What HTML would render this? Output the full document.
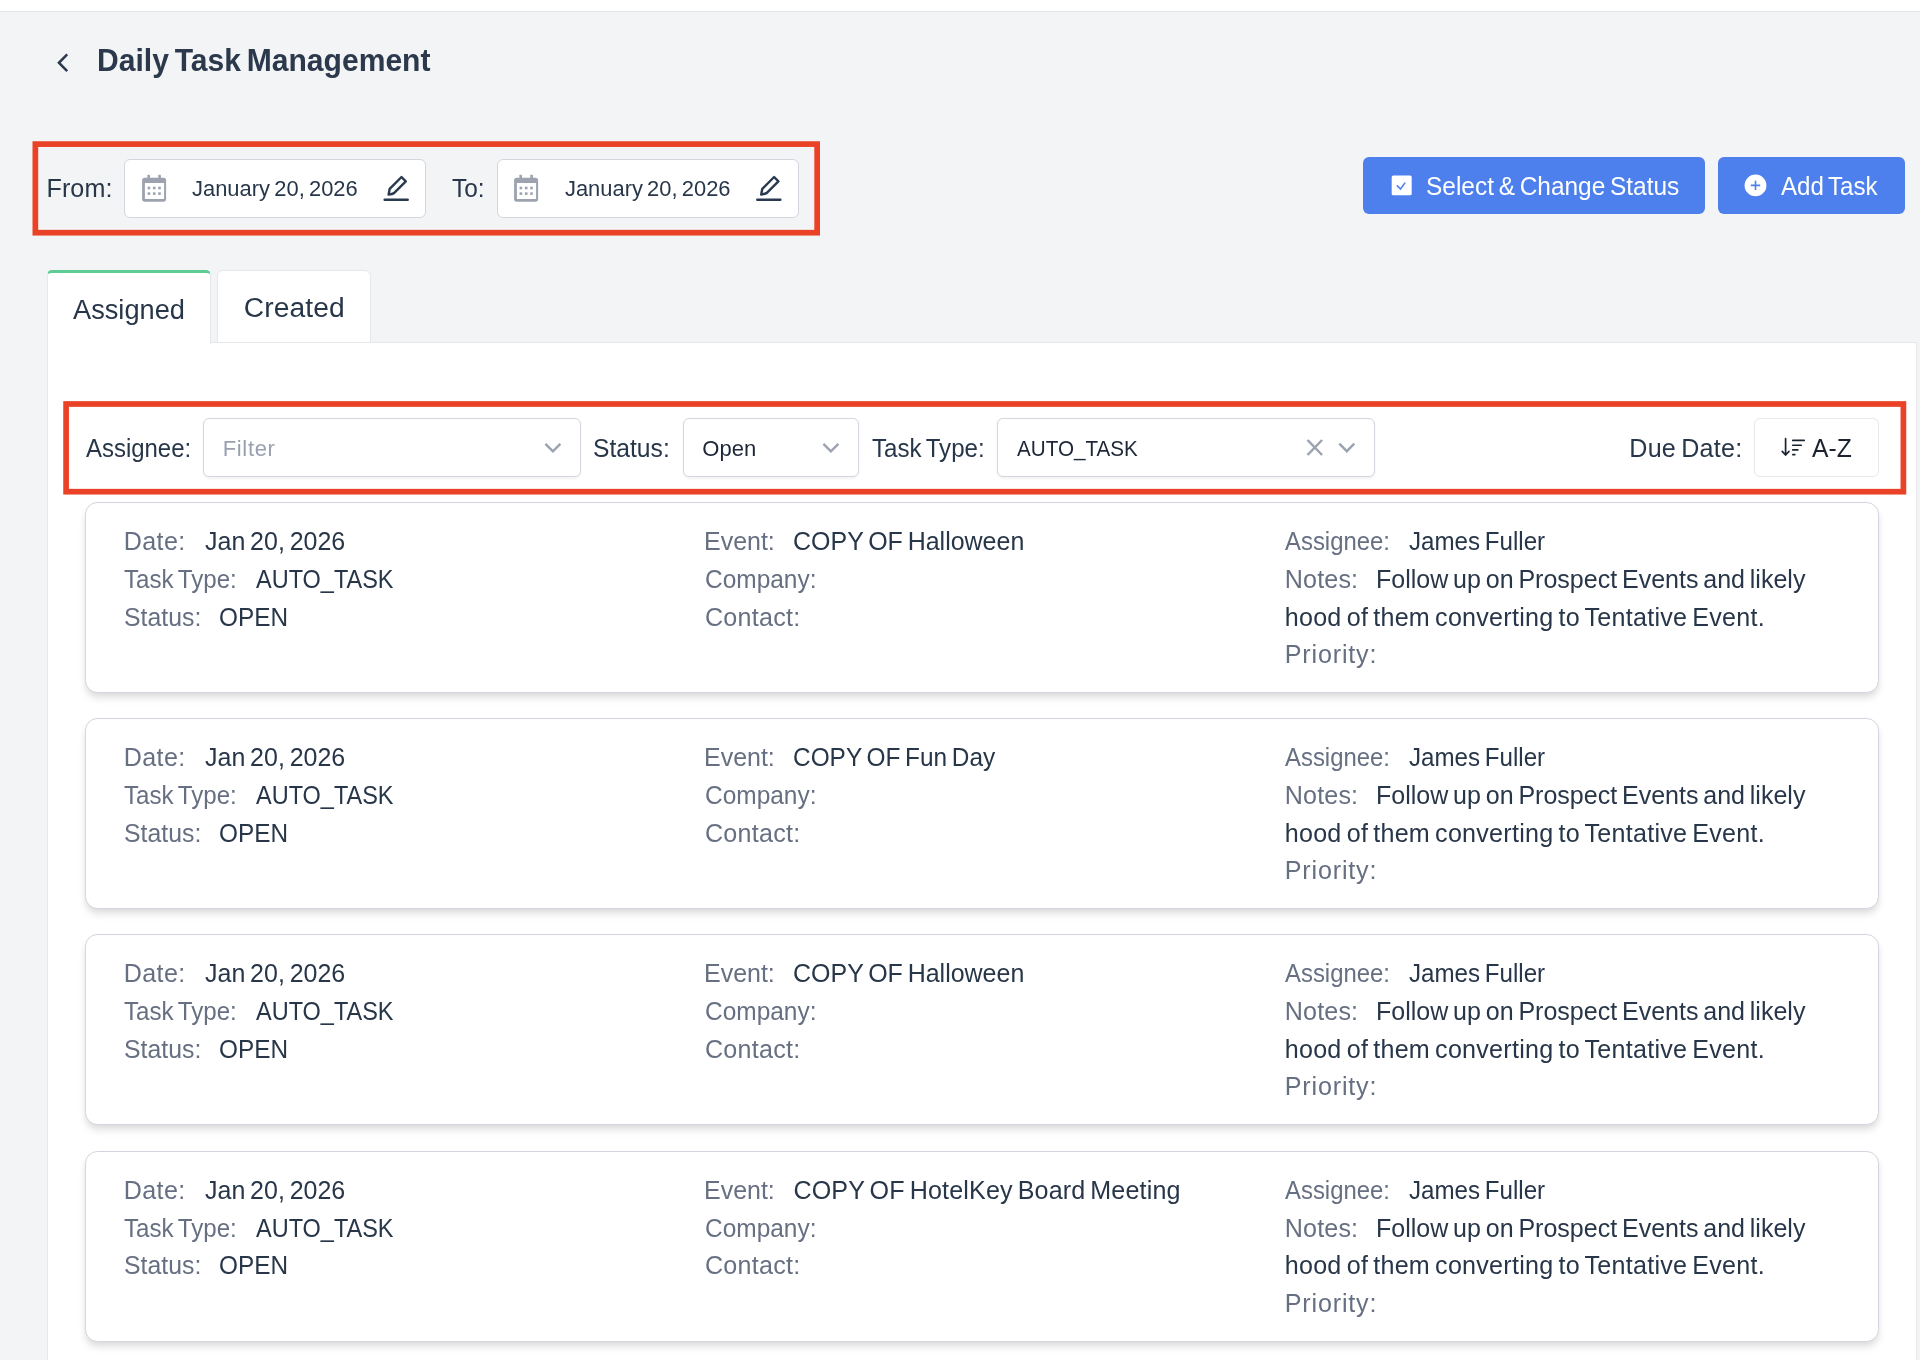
<!DOCTYPE html>
<html lang="en"><head><meta charset="utf-8"><title>Daily Task Management</title><style>
*{box-sizing:border-box;margin:0;padding:0}
html,body{width:1920px;height:1360px;overflow:hidden}
body{background:#f3f4f6;font-family:"Liberation Sans",sans-serif;position:relative;-webkit-font-smoothing:antialiased}
.a{position:absolute}
.t{position:absolute;white-space:nowrap;font-kerning:normal;transform-origin:0 0;word-spacing:-0.085em}
.topbar{left:0;top:0;width:1920px;height:12px;background:#fff;border-bottom:1px solid #e4e5e8}
.inp{background:#fff;border:1px solid #d3d6de;border-radius:6px}
.sel{background:#fff;border:1px solid #d3d6de;border-radius:6px;box-shadow:0 1.5px 3px rgba(0,0,0,.05)}
.btn{background:#4d80ec;border-radius:6px}
.panel{left:47px;top:342px;width:1870px;height:1030px;background:#fff;border:1px solid #e7e8ec}
.tab1{left:47px;top:270px;width:164px;height:74px;background:#fff;border:1px solid #e7e8ec;border-top:3px solid #5fcc96;border-bottom:none;border-radius:5px 5px 0 0}
.tab2{left:217px;top:270px;width:154px;height:73px;background:#fff;border:1px solid #e6e7eb;border-radius:6px 6px 0 0}
.card{left:85px;width:1794px;height:191px;background:#fff;border:1px solid #d3d6de;border-radius:12.5px;box-shadow:0 6px 9px -1.5px rgba(0,0,0,.10),0 3px 6px -1.5px rgba(0,0,0,.06)}
.txt{left:0;top:0;width:1920px;height:1360px;will-change:transform}
svg{position:absolute;left:0;top:0;overflow:visible}
</style></head>
<body>
<div class="a topbar"></div>
<div class="a inp" style="left:124.25px;top:159px;width:301.6px;height:58.7px"></div>
<div class="a inp" style="left:497.25px;top:159px;width:301.6px;height:58.7px"></div>
<div class="a btn" style="left:1363px;top:156.8px;width:342px;height:57px"></div>
<div class="a btn" style="left:1718px;top:156.8px;width:187px;height:57px"></div>
<div class="a panel"></div>
<div class="a tab2"></div>
<div class="a tab1"></div>
<div class="a sel" style="left:203.25px;top:418px;width:377.4px;height:58.5px"></div>
<div class="a sel" style="left:683.25px;top:418px;width:175.5px;height:58.5px"></div>
<div class="a sel" style="left:997.25px;top:418px;width:377.75px;height:58.5px"></div>
<div class="a sel" style="left:1754.25px;top:418px;width:124.5px;height:58.5px;border-color:#e6e8ec;box-shadow:none"></div>
<div class="a card" style="top:502px"></div>
<div class="a card" style="top:718px"></div>
<div class="a card" style="top:934px"></div>
<div class="a card" style="top:1151px"></div>
<svg width="1920" height="1360" viewBox="0 0 1920 1360">
<rect x="35.35" y="144.1" width="781.8" height="88.6" fill="none" stroke="#e94226" stroke-width="5.7"/>
<rect x="66.1" y="404.0" width="1837.3" height="87.7" fill="none" stroke="#e94226" stroke-width="5.7"/>
<path d="M67.2 54.3L58.9 62.75L67.2 71.2" fill="none" stroke="#2d3a4e" stroke-width="2.5"/>

<g fill="#9ca3af">
<rect x="147.40" y="174.8" width="2.6" height="4" rx=".4"/>
<rect x="158.30" y="174.8" width="2.6" height="4" rx=".4"/>
<path fill-rule="evenodd" d="M144.70 177.7h18.8a2.6 2.6 0 0 1 2.6 2.6v18.8a2.6 2.6 0 0 1 -2.6 2.6h-18.8a2.6 2.6 0 0 1 -2.6 -2.6v-18.8a2.6 2.6 0 0 1 2.6 -2.6zM144.90 182.9v16h19.2v-16z"/>
<rect x="147.60" y="186.70" width="2.6" height="2.6"/><rect x="147.60" y="192.30" width="2.6" height="2.6"/><rect x="152.90" y="186.70" width="2.6" height="2.6"/><rect x="152.90" y="192.30" width="2.6" height="2.6"/><rect x="158.20" y="186.70" width="2.6" height="2.6"/><rect x="158.20" y="192.30" width="2.6" height="2.6"/>
</g>


<g fill="#9ca3af">
<rect x="519.40" y="174.8" width="2.6" height="4" rx=".4"/>
<rect x="530.30" y="174.8" width="2.6" height="4" rx=".4"/>
<path fill-rule="evenodd" d="M516.70 177.7h18.8a2.6 2.6 0 0 1 2.6 2.6v18.8a2.6 2.6 0 0 1 -2.6 2.6h-18.8a2.6 2.6 0 0 1 -2.6 -2.6v-18.8a2.6 2.6 0 0 1 2.6 -2.6zM516.90 182.9v16h19.2v-16z"/>
<rect x="519.60" y="186.70" width="2.6" height="2.6"/><rect x="519.60" y="192.30" width="2.6" height="2.6"/><rect x="524.90" y="186.70" width="2.6" height="2.6"/><rect x="524.90" y="192.30" width="2.6" height="2.6"/><rect x="530.20" y="186.70" width="2.6" height="2.6"/><rect x="530.20" y="192.30" width="2.6" height="2.6"/>
</g>


<g transform="translate(0 0)" fill="none" stroke="#29394f" stroke-width="2.4" stroke-linejoin="round" stroke-linecap="round">
<path d="M401.5 177.0L405.8 181.3L394.0 193.1Q392.5 194.0 388.6 194.5L389.7 188.8Z"/>
<path d="M384.7 199.65H407.7" stroke-width="2.5"/>
</g>

<g transform="translate(372.6 0)" fill="none" stroke="#29394f" stroke-width="2.4" stroke-linejoin="round" stroke-linecap="round">
<path d="M401.5 177.0L405.8 181.3L394.0 193.1Q392.5 194.0 388.6 194.5L389.7 188.8Z"/>
<path d="M384.7 199.65H407.7" stroke-width="2.5"/>
</g>
<path d="M545.40 443.80L552.90 451.40L560.40 443.80" fill="none" stroke="#9ca3b0" stroke-width="2.4"/>
<path d="M823.40 443.80L830.90 451.40L838.40 443.80" fill="none" stroke="#9ca3b0" stroke-width="2.4"/>
<path d="M1339.30 443.60L1346.80 451.20L1354.30 443.60" fill="none" stroke="#9ca3b0" stroke-width="2.4"/>
<path d="M1307.5 440.0L1322.1 455.0M1322.1 440.0L1307.5 455.0" fill="none" stroke="#9ca3b0" stroke-width="2.5"/>
<g fill="none" stroke="#1b2331" stroke-width="1.7" stroke-linecap="round" stroke-linejoin="round"><path d="M1785.6 438.7V454.6M1782.2 451.3L1785.6 455L1789.0 451.3"/><path d="M1792.8 440.4H1804.2M1792.8 445.25H1801.2M1792.8 449.9H1797.8M1792.8 454.6H1794.8"/></g>
<rect x="1391.7" y="175.5" width="20" height="19.8" rx="1.6" fill="#fff"/><path d="M1396.9 185.4L1400.5 189.0L1405.2 182.6" fill="none" stroke="#4d80ec" stroke-width="1.6"/>
<circle cx="1755.5" cy="185.4" r="10.9" fill="#fff"/><path d="M1750.8 185.4H1760.2M1755.5 180.7V190.1" fill="none" stroke="#4d80ec" stroke-width="1.6"/>
</svg>
<div class="a txt"><div class="t" style="left:97.28px;top:37px;font-size:31.40px;line-height:47px;letter-spacing:0.000px;color:#2c394c;transform:scaleX(0.9577);font-weight:700;">Daily Task Management</div>
<div class="t" style="left:46.50px;top:169px;font-size:25.10px;line-height:38px;letter-spacing:0.089px;color:#283649;">From:</div>
<div class="t" style="left:192.00px;top:172px;font-size:22.00px;line-height:33px;letter-spacing:0.000px;color:#283649;transform:scaleX(0.9967);">January 20, 2026</div>
<div class="t" style="left:452.20px;top:169px;font-size:25.10px;line-height:38px;letter-spacing:0.000px;color:#283649;transform:scaleX(0.9745);">To:</div>
<div class="t" style="left:565.00px;top:172px;font-size:22.00px;line-height:33px;letter-spacing:0.000px;color:#283649;transform:scaleX(0.9952);">January 20, 2026</div>
<div class="t" style="left:1426.03px;top:167px;font-size:25.10px;line-height:38px;letter-spacing:0.000px;color:#ffffff;transform:scaleX(0.9741);">Select &amp; Change Status</div>
<div class="t" style="left:1781.30px;top:167px;font-size:25.10px;line-height:38px;letter-spacing:0.000px;color:#ffffff;transform:scaleX(0.9596);">Add Task</div>
<div class="t" style="left:72.80px;top:288px;font-size:28.20px;line-height:42px;letter-spacing:0.000px;color:#283649;transform:scaleX(0.9652);">Assigned</div>
<div class="t" style="left:243.70px;top:286px;font-size:28.20px;line-height:42px;letter-spacing:0.133px;color:#283649;">Created</div>
<div class="t" style="left:86.25px;top:429px;font-size:25.10px;line-height:38px;letter-spacing:0.000px;color:#283649;transform:scaleX(0.9540);">Assignee:</div>
<div class="t" style="left:222.75px;top:432px;font-size:22.00px;line-height:33px;letter-spacing:0.638px;color:#99a0b0;">Filter</div>
<div class="t" style="left:593.42px;top:429px;font-size:25.10px;line-height:38px;letter-spacing:0.000px;color:#283649;transform:scaleX(0.9828);">Status:</div>
<div class="t" style="left:702.25px;top:432px;font-size:22.00px;line-height:33px;letter-spacing:0.056px;color:#1e2737;">Open</div>
<div class="t" style="left:872.00px;top:429px;font-size:25.10px;line-height:38px;letter-spacing:0.000px;color:#283649;transform:scaleX(0.9599);">Task Type:</div>
<div class="t" style="left:1016.70px;top:432px;font-size:22.00px;line-height:33px;letter-spacing:0.000px;color:#1e2737;transform:scaleX(0.9388);">AUTO_TASK</div>
<div class="t" style="left:1629.25px;top:429px;font-size:25.10px;line-height:38px;letter-spacing:0.265px;color:#283649;">Due Date:</div>
<div class="t" style="left:1812.30px;top:429px;font-size:25.10px;line-height:38px;letter-spacing:0.000px;color:#1b2331;transform:scaleX(0.9827);">A-Z</div>
<div class="t" style="left:123.80px;top:522px;font-size:25.10px;line-height:38px;letter-spacing:0.374px;color:#676f82;">Date:</div>
<div class="t" style="left:204.50px;top:522px;font-size:25.10px;line-height:38px;letter-spacing:0.000px;color:#283649;transform:scaleX(0.9955);">Jan 20, 2026</div>
<div class="t" style="left:124.40px;top:560px;font-size:25.10px;line-height:38px;letter-spacing:0.000px;color:#676f82;transform:scaleX(0.9607);">Task Type:</div>
<div class="t" style="left:256.25px;top:560px;font-size:25.10px;line-height:38px;letter-spacing:0.000px;color:#283649;transform:scaleX(0.9361);">AUTO_TASK</div>
<div class="t" style="left:123.91px;top:598px;font-size:25.10px;line-height:38px;letter-spacing:0.000px;color:#676f82;transform:scaleX(0.9895);">Status:</div>
<div class="t" style="left:219.03px;top:598px;font-size:25.10px;line-height:38px;letter-spacing:0.000px;color:#283649;transform:scaleX(0.9711);">OPEN</div>
<div class="t" style="left:704.41px;top:522px;font-size:25.10px;line-height:38px;letter-spacing:0.000px;color:#676f82;transform:scaleX(0.9953);">Event:</div>
<div class="t" style="left:793.40px;top:522px;font-size:25.10px;line-height:38px;letter-spacing:0.000px;color:#283649;transform:scaleX(0.9954);">COPY OF Halloween</div>
<div class="t" style="left:704.93px;top:560px;font-size:25.10px;line-height:38px;letter-spacing:0.000px;color:#676f82;transform:scaleX(0.9749);">Company:</div>
<div class="t" style="left:704.90px;top:598px;font-size:25.10px;line-height:38px;letter-spacing:0.267px;color:#676f82;">Contact:</div>
<div class="t" style="left:1285.30px;top:522px;font-size:25.10px;line-height:38px;letter-spacing:0.000px;color:#676f82;transform:scaleX(0.9526);">Assignee:</div>
<div class="t" style="left:1409.25px;top:522px;font-size:25.10px;line-height:38px;letter-spacing:0.000px;color:#283649;transform:scaleX(0.9618);">James Fuller</div>
<div class="t" style="left:1284.75px;top:560px;font-size:25.10px;line-height:38px;letter-spacing:0.159px;color:#676f82;">Notes:</div>
<div class="t" style="left:1376.41px;top:560px;font-size:25.10px;line-height:38px;letter-spacing:0.000px;color:#283649;transform:scaleX(0.9969);">Follow up on Prospect Events and likely</div>
<div class="t" style="left:1284.75px;top:598px;font-size:25.10px;line-height:38px;letter-spacing:0.252px;color:#283649;">hood of them converting to Tentative Event.</div>
<div class="t" style="left:1284.75px;top:635px;font-size:25.10px;line-height:38px;letter-spacing:0.834px;color:#676f82;">Priority:</div>
<div class="t" style="left:123.80px;top:738px;font-size:25.10px;line-height:38px;letter-spacing:0.374px;color:#676f82;">Date:</div>
<div class="t" style="left:204.50px;top:738px;font-size:25.10px;line-height:38px;letter-spacing:0.000px;color:#283649;transform:scaleX(0.9955);">Jan 20, 2026</div>
<div class="t" style="left:124.40px;top:776px;font-size:25.10px;line-height:38px;letter-spacing:0.000px;color:#676f82;transform:scaleX(0.9607);">Task Type:</div>
<div class="t" style="left:256.25px;top:776px;font-size:25.10px;line-height:38px;letter-spacing:0.000px;color:#283649;transform:scaleX(0.9361);">AUTO_TASK</div>
<div class="t" style="left:123.91px;top:814px;font-size:25.10px;line-height:38px;letter-spacing:0.000px;color:#676f82;transform:scaleX(0.9895);">Status:</div>
<div class="t" style="left:219.03px;top:814px;font-size:25.10px;line-height:38px;letter-spacing:0.000px;color:#283649;transform:scaleX(0.9711);">OPEN</div>
<div class="t" style="left:704.41px;top:738px;font-size:25.10px;line-height:38px;letter-spacing:0.000px;color:#676f82;transform:scaleX(0.9953);">Event:</div>
<div class="t" style="left:793.43px;top:738px;font-size:25.10px;line-height:38px;letter-spacing:0.000px;color:#283649;transform:scaleX(0.9728);">COPY OF Fun Day</div>
<div class="t" style="left:704.93px;top:776px;font-size:25.10px;line-height:38px;letter-spacing:0.000px;color:#676f82;transform:scaleX(0.9749);">Company:</div>
<div class="t" style="left:704.90px;top:814px;font-size:25.10px;line-height:38px;letter-spacing:0.267px;color:#676f82;">Contact:</div>
<div class="t" style="left:1285.30px;top:738px;font-size:25.10px;line-height:38px;letter-spacing:0.000px;color:#676f82;transform:scaleX(0.9526);">Assignee:</div>
<div class="t" style="left:1409.25px;top:738px;font-size:25.10px;line-height:38px;letter-spacing:0.000px;color:#283649;transform:scaleX(0.9618);">James Fuller</div>
<div class="t" style="left:1284.75px;top:776px;font-size:25.10px;line-height:38px;letter-spacing:0.159px;color:#676f82;">Notes:</div>
<div class="t" style="left:1376.41px;top:776px;font-size:25.10px;line-height:38px;letter-spacing:0.000px;color:#283649;transform:scaleX(0.9969);">Follow up on Prospect Events and likely</div>
<div class="t" style="left:1284.75px;top:814px;font-size:25.10px;line-height:38px;letter-spacing:0.252px;color:#283649;">hood of them converting to Tentative Event.</div>
<div class="t" style="left:1284.75px;top:851px;font-size:25.10px;line-height:38px;letter-spacing:0.834px;color:#676f82;">Priority:</div>
<div class="t" style="left:123.80px;top:954px;font-size:25.10px;line-height:38px;letter-spacing:0.374px;color:#676f82;">Date:</div>
<div class="t" style="left:204.50px;top:954px;font-size:25.10px;line-height:38px;letter-spacing:0.000px;color:#283649;transform:scaleX(0.9955);">Jan 20, 2026</div>
<div class="t" style="left:124.40px;top:992px;font-size:25.10px;line-height:38px;letter-spacing:0.000px;color:#676f82;transform:scaleX(0.9607);">Task Type:</div>
<div class="t" style="left:256.25px;top:992px;font-size:25.10px;line-height:38px;letter-spacing:0.000px;color:#283649;transform:scaleX(0.9361);">AUTO_TASK</div>
<div class="t" style="left:123.91px;top:1030px;font-size:25.10px;line-height:38px;letter-spacing:0.000px;color:#676f82;transform:scaleX(0.9895);">Status:</div>
<div class="t" style="left:219.03px;top:1030px;font-size:25.10px;line-height:38px;letter-spacing:0.000px;color:#283649;transform:scaleX(0.9711);">OPEN</div>
<div class="t" style="left:704.41px;top:954px;font-size:25.10px;line-height:38px;letter-spacing:0.000px;color:#676f82;transform:scaleX(0.9953);">Event:</div>
<div class="t" style="left:793.40px;top:954px;font-size:25.10px;line-height:38px;letter-spacing:0.000px;color:#283649;transform:scaleX(0.9954);">COPY OF Halloween</div>
<div class="t" style="left:704.93px;top:992px;font-size:25.10px;line-height:38px;letter-spacing:0.000px;color:#676f82;transform:scaleX(0.9749);">Company:</div>
<div class="t" style="left:704.90px;top:1030px;font-size:25.10px;line-height:38px;letter-spacing:0.267px;color:#676f82;">Contact:</div>
<div class="t" style="left:1285.30px;top:954px;font-size:25.10px;line-height:38px;letter-spacing:0.000px;color:#676f82;transform:scaleX(0.9526);">Assignee:</div>
<div class="t" style="left:1409.25px;top:954px;font-size:25.10px;line-height:38px;letter-spacing:0.000px;color:#283649;transform:scaleX(0.9618);">James Fuller</div>
<div class="t" style="left:1284.75px;top:992px;font-size:25.10px;line-height:38px;letter-spacing:0.159px;color:#676f82;">Notes:</div>
<div class="t" style="left:1376.41px;top:992px;font-size:25.10px;line-height:38px;letter-spacing:0.000px;color:#283649;transform:scaleX(0.9969);">Follow up on Prospect Events and likely</div>
<div class="t" style="left:1284.75px;top:1030px;font-size:25.10px;line-height:38px;letter-spacing:0.252px;color:#283649;">hood of them converting to Tentative Event.</div>
<div class="t" style="left:1284.75px;top:1067px;font-size:25.10px;line-height:38px;letter-spacing:0.834px;color:#676f82;">Priority:</div>
<div class="t" style="left:123.80px;top:1171px;font-size:25.10px;line-height:38px;letter-spacing:0.374px;color:#676f82;">Date:</div>
<div class="t" style="left:204.50px;top:1171px;font-size:25.10px;line-height:38px;letter-spacing:0.000px;color:#283649;transform:scaleX(0.9955);">Jan 20, 2026</div>
<div class="t" style="left:124.40px;top:1209px;font-size:25.10px;line-height:38px;letter-spacing:0.000px;color:#676f82;transform:scaleX(0.9607);">Task Type:</div>
<div class="t" style="left:256.25px;top:1209px;font-size:25.10px;line-height:38px;letter-spacing:0.000px;color:#283649;transform:scaleX(0.9361);">AUTO_TASK</div>
<div class="t" style="left:123.91px;top:1246px;font-size:25.10px;line-height:38px;letter-spacing:0.000px;color:#676f82;transform:scaleX(0.9895);">Status:</div>
<div class="t" style="left:219.03px;top:1246px;font-size:25.10px;line-height:38px;letter-spacing:0.000px;color:#283649;transform:scaleX(0.9711);">OPEN</div>
<div class="t" style="left:704.41px;top:1171px;font-size:25.10px;line-height:38px;letter-spacing:0.000px;color:#676f82;transform:scaleX(0.9953);">Event:</div>
<div class="t" style="left:793.40px;top:1171px;font-size:25.10px;line-height:38px;letter-spacing:0.143px;color:#283649;">COPY OF HotelKey Board Meeting</div>
<div class="t" style="left:704.93px;top:1209px;font-size:25.10px;line-height:38px;letter-spacing:0.000px;color:#676f82;transform:scaleX(0.9749);">Company:</div>
<div class="t" style="left:704.90px;top:1246px;font-size:25.10px;line-height:38px;letter-spacing:0.267px;color:#676f82;">Contact:</div>
<div class="t" style="left:1285.30px;top:1171px;font-size:25.10px;line-height:38px;letter-spacing:0.000px;color:#676f82;transform:scaleX(0.9526);">Assignee:</div>
<div class="t" style="left:1409.25px;top:1171px;font-size:25.10px;line-height:38px;letter-spacing:0.000px;color:#283649;transform:scaleX(0.9618);">James Fuller</div>
<div class="t" style="left:1284.75px;top:1209px;font-size:25.10px;line-height:38px;letter-spacing:0.159px;color:#676f82;">Notes:</div>
<div class="t" style="left:1376.41px;top:1209px;font-size:25.10px;line-height:38px;letter-spacing:0.000px;color:#283649;transform:scaleX(0.9969);">Follow up on Prospect Events and likely</div>
<div class="t" style="left:1284.75px;top:1246px;font-size:25.10px;line-height:38px;letter-spacing:0.252px;color:#283649;">hood of them converting to Tentative Event.</div>
<div class="t" style="left:1284.75px;top:1284px;font-size:25.10px;line-height:38px;letter-spacing:0.834px;color:#676f82;">Priority:</div></div>
</body></html>
